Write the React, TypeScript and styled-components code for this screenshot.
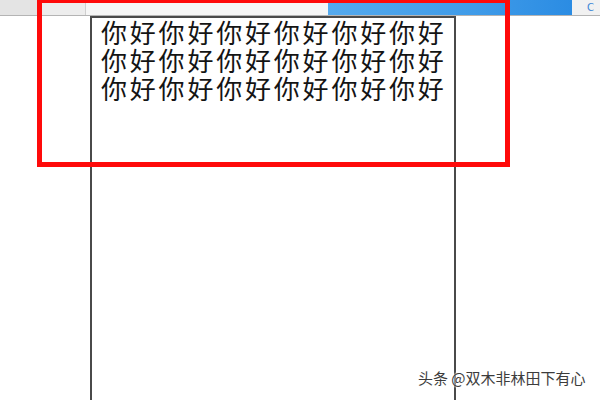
import React from "react";
import styled, { createGlobalStyle } from "styled-components";

const Global = createGlobalStyle`
  html, body { margin: 0; padding: 0; background: #ffffff; }
  body { overflow: hidden; font-family: "Noto Sans CJK SC", "Noto Sans", sans-serif; }
`;

const Page = styled.div`
  position: relative;
  width: 600px;
  height: 400px;
  overflow: hidden;
  background: #ffffff;
  display: flex;
  flex-direction: column;
`;

const TopBar = styled.div`
  display: flex;
  height: 15px;
  border-bottom: 1px solid #b4b4b4;
  flex-shrink: 0;
`;

const Segment = styled.div<{ $w?: number; $bg: string; $divider?: boolean }>`
  ${(p) => (p.$w ? `width: ${p.$w}px;` : "flex: 1;")}
  background: ${(p) => p.$bg};
  ${(p) => (p.$divider ? "border-right: 1px solid #cfcfcf;" : "")}
  display: flex;
  align-items: center;
  justify-content: flex-end;
  box-sizing: border-box;
`;

const BlueSegment = styled.div`
  width: 244px;
  background: linear-gradient(90deg, #55aaee 0%, #3f9be8 60%, #2b8ce3 100%);
`;

const RefreshGlyph = styled.span`
  font-family: "DejaVu Sans", sans-serif;
  font-size: 10px;
  line-height: 10px;
  color: #3a86d6;
  margin-right: 6px;
`;

const Canvas = styled.div`
  flex: 1;
  display: flex;
`;

const TextBox = styled.div`
  margin-left: 90px;
  width: 366px;
  box-sizing: border-box;
  border: 2px solid #4a4a4a;
  border-bottom: none;
  padding: 0 0 0 9px;
  font-family: "Noto Sans CJK SC", "Noto Sans CJK JP", sans-serif;
  font-size: 26px;
  letter-spacing: 2.8px;
  line-height: 28px;
  color: #141414;
  word-break: break-all;
`;

const Highlight = styled.div`
  position: absolute;
  left: 37px;
  top: -2px;
  width: 473px;
  height: 169px;
  box-sizing: border-box;
  border: 5px solid #ff0a0a;
  pointer-events: none;
`;

const Watermark = styled.div`
  position: absolute;
  left: 418px;
  top: 370px;
  font-family: "Noto Sans CJK SC", sans-serif;
  font-size: 15px;
  line-height: 16px;
  color: #3c3c3c;
  text-shadow: 0 0 2px #ffffff, 0 0 2px #ffffff;
  white-space: nowrap;
`;

export default function App() {
  const text = "你好".repeat(18);
  return (
    <>
      <Global />
      <Page>
        <TopBar>
          <Segment $w={42} $bg="#e4e4e4" />
          <Segment $w={44} $bg="#ededed" $divider />
          <Segment $w={242} $bg="#f6f6f6" />
          <BlueSegment />
          <Segment $bg="#f1f1f1">
            <RefreshGlyph>C</RefreshGlyph>
          </Segment>
        </TopBar>
        <Canvas>
          <TextBox>{text}</TextBox>
        </Canvas>
        <Highlight />
        <Watermark>头条 @双木非林田下有心</Watermark>
      </Page>
    </>
  );
}
